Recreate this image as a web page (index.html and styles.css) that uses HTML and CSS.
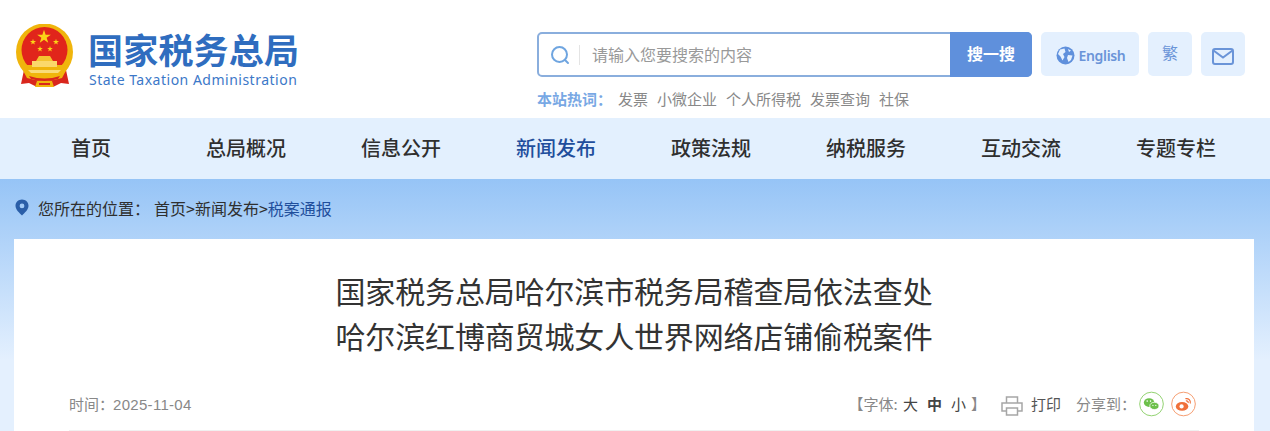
FILE: index.html
```html
<!DOCTYPE html>
<html lang="zh-CN">
  <head>
    <meta charset="utf-8">
    <title>国家税务总局</title>
    <link rel="stylesheet" href="styles.css">
  </head>
  <body>
    <header class="top">
      <a class="logo">
        <svg class="emblem" width="60" height="64" viewBox="0 0 60 64">
          <defs>
            <path id="star" d="M0-10 2.245-3.090 9.510-3.090 3.633 1.180 5.878 8.090 0 3.820-5.878 8.090-3.633 1.180-9.510-3.090-2.245-3.090Z" fill="#fbd317"/>
          </defs>
          <path d="M9 46 L6 60 L14 59 L22 63 H38 L46 59 L54 60 L51 46Z" fill="#d9261c"/>
          <circle cx="29.500" cy="28" r="28.500" fill="#f0b50c"/>
          <circle cx="29.500" cy="26" r="23" fill="#e1251b"/>
          <path d="M5 41 H54 L47 54 Q29.500 60 12 54Z" fill="#f0b50c"/>
          <path d="M13 46 H46 L43 49 H16Z" fill="#f9dc7a"/>
          <path d="M14 52 Q29.500 57 45 52 L43 55 Q29.500 59 16 55Z" fill="#d9261c"/>
          <path d="M22 57 H37 L39 63 H20Z" fill="#f0b50c"/>
          <path d="M24 59 H35 V61 H24Z" fill="#d9261c"/>
          <path d="M24 32 H35 L38 37 H21Z" fill="#f4c430"/>
          <path d="M17 37 H42 V43 H17Z" fill="#fbd86a"/>
          <use href="#star" transform="translate(29 13) scale(.72)"/>
          <use href="#star" transform="translate(18 18) scale(.32)"/>
          <use href="#star" transform="translate(41 18) scale(.32)"/>
          <use href="#star" transform="translate(25 25) scale(.3)"/>
          <use href="#star" transform="translate(35 25) scale(.3)"/>
        </svg>
        <div class="logo-text">
          <div class="logo-cn">国家税务总局</div>
          <div class="logo-en">State Taxation Administration</div>
        </div>
      </a>
      <div class="tools">
        <div class="tools-row">
          <div class="search">
            <svg class="search-icon" width="20" height="20" viewBox="0 0 20 20" fill="none" stroke="#6fa5e0" stroke-width="2">
              <circle cx="9.500" cy="9.500" r="7.500"/>
              <path d="M15 15 L18 18" stroke-linecap="round"/>
            </svg>
            <span class="search-sep"></span>
            <span class="search-hint">请输入您要搜索的内容</span>
            <span class="search-btn">搜一搜</span>
          </div>
          <a class="chip chip-en">
            <svg width="19" height="19" viewBox="0 0 19 19">
              <circle cx="9.500" cy="9.500" r="9" fill="#5f90dc"/>
              <path d="M4 3.500 L8.500 2.500 L9.500 6 L7 8 L8.500 11 L6.500 14.500 L4.500 10.500 L2 8Z M12 9 L16.500 9.500 L15 14 L12.500 16 L11 12Z M12 3 L15 4.500 L13 6Z" fill="#e4f0fe"/>
            </svg>
            English
          </a>
          <a class="chip chip-sq chip-fan">繁</a>
          <a class="chip chip-sq chip-mail">
            <svg width="22" height="17" viewBox="0 0 22 17" fill="none" stroke="#6a94d8" stroke-width="2">
              <rect x="1" y="1" width="20" height="15" rx="2"/>
              <path d="M1.500 2.500 L11 9.500 L20.500 2.500"/>
            </svg>
          </a>
        </div>
        <div class="hot">
          <b>本站热词：</b>
          <a>发票</a><a>小微企业</a><a>个人所得税</a><a>发票查询</a><a>社保</a>
        </div>
      </div>
    </header>

    <nav class="nav">
      <a>首页</a>
      <a>总局概况</a>
      <a>信息公开</a>
      <a class="on">新闻发布</a>
      <a>政策法规</a>
      <a>纳税服务</a>
      <a>互动交流</a>
      <a>专题专栏</a>
    </nav>

    <main class="page">
      <div class="crumb">
        <svg width="14" height="17" viewBox="0 0 14 17">
          <path fill-rule="evenodd" d="M7 0.500 C3.300 .5 .5 3.300 .5 6.800 C.5 10.800 4.500 14 7 16.500 C9.500 14 13.500 10.800 13.500 6.800 C13.500 3.300 10.700 .5 7 .5Z M7 4.500 A2.400 2.400 0 1 1 7 9.300 A2.400 2.400 0 1 1 7 4.500Z" fill="#2a5ea8"/>
        </svg>
        <span class="crumb-label">您所在的位置：</span>
        <span>首页&gt;新闻发布&gt;<a class="crumb-now">税案通报</a></span>
      </div>
      <article class="card">
        <h1 class="title">国家税务总局哈尔滨市税务局稽查局依法查处<br>哈尔滨红博商贸城女人世界网络店铺偷税案件</h1>
        <div class="meta">
          <span class="date meta-txt">时间：<span class="date-num">2025-11-04</span></span>
          <div class="meta-right">
            <span class="fontsize meta-txt">【字体: <b class="sz">大</b><b class="sz sz-on">中</b><b class="sz">小</b><span class="close">】</span></span>
            <a class="print">
              <svg width="22" height="20" viewBox="0 0 22 20" fill="none" stroke="#a6a6a6" stroke-width="1.500">
                <path d="M5.500 7 V1 H16.500 V7"/>
                <path d="M5.500 15 H1 V7 H21 V15 H16.500"/>
                <path d="M5.500 12 H16.500 V19 H5.500Z"/>
              </svg>
              <span class="meta-txt">打印</span>
            </a>
            <span class="meta-txt">分享到：</span>
            <svg class="share-ico share-wx" width="25" height="26" viewBox="0 0 26 26">
              <circle cx="13" cy="13" r="12.300" fill="#fff" stroke="#8fd06c"/>
              <ellipse cx="10.500" cy="11.500" rx="5.500" ry="4.500" fill="#6cc04a"/>
              <ellipse cx="16" cy="15" rx="4.800" ry="3.800" fill="#6cc04a" stroke="#fff" stroke-width=".8"/>
              <circle cx="8.500" cy="10" r=".8" fill="#fff"/>
              <circle cx="12" cy="10" r=".8" fill="#fff"/>
              <circle cx="14.500" cy="14.500" r=".6" fill="#fff"/>
              <circle cx="17.500" cy="14.500" r=".6" fill="#fff"/>
            </svg>
            <svg class="share-ico share-wb" width="25" height="26" viewBox="0 0 26 26">
              <circle cx="13" cy="13" r="12.300" fill="#fff" stroke="#f59a6c"/>
              <ellipse cx="11.500" cy="15.500" rx="6.500" ry="4.500" fill="#f0703a"/>
              <circle cx="11" cy="15.500" r="2.200" fill="#fff"/>
              <path d="M15 7.500 A4 4 0 0 1 20 12.500 M15.500 9.800 A1.800 1.800 0 0 1 17.800 12" fill="none" stroke="#f0703a" stroke-width="1.300"/>
            </svg>
          </div>
        </div>
      </article>
    </main>
  </body>
</html>
```

FILE: styles.css
```css
html, body {
  margin: 0;
  padding: 0;
}

body {
  font-family: "Noto Sans CJK SC", "Liberation Sans", sans-serif;
  color: #333;
  overflow: hidden;
  height: 431px;
}

a {
  color: inherit;
  text-decoration: none;
}

.top {
  display: flex;
  justify-content: space-between;
  height: 118px;
  padding: 0 25px 0 15px;
  box-sizing: border-box;
}

.logo {
  display: flex;
  gap: 13px;
  padding-top: 24px;
}

.logo-cn {
  font-size: 35px;
  line-height: 40px;
  letter-spacing: .2px;
  margin-top: 5px;
  font-weight: 700;
  color: #2f6dbf;
  white-space: nowrap;
}

.logo-en {
  font-family: "Noto Sans", sans-serif;
  font-size: 14px;
  line-height: 20px;
  letter-spacing: .5px;
  margin: 1px 0 0 1px;
  color: #3c78c8;
  white-space: nowrap;
}

.tools {
  padding-top: 32px;
}

.tools-row {
  display: flex;
  gap: 9px;
}

.search {
  display: flex;
  align-items: center;
  width: 495px;
  height: 45px;
  box-sizing: border-box;
  border: 2px solid #8aaedd;
  border-radius: 5px;
  padding-left: 11px;
}

.search-sep {
  width: 1px;
  height: 20px;
  background: #e4e4e4;
  margin: 0 12px 0 9px;
}

.search-hint {
  flex: 1;
  padding-bottom: 2px;
  font-size: 16px;
  color: #999;
}

.search-btn {
  width: 82px;
  height: 45px;
  margin-right: -2px;
  border-radius: 0 5px 5px 0;
  background: #5f90dc;
  color: #fff;
  font-size: 16px;
  font-weight: 700;
  line-height: 43px;
  text-align: center;
}

.chip {
  display: flex;
  align-items: center;
  justify-content: center;
  height: 44px;
  box-sizing: border-box;
  background: #e4f0fe;
  border-radius: 5px;
  color: #6a94d8;
}

.chip-en {
  width: 98px;
  gap: 4px;
  padding: 2px 0 0 1px;
  font-family: "Noto Sans", sans-serif;
  font-size: 14px;
  font-weight: 600;
  letter-spacing: -.35px;
}

.chip-sq {
  width: 44px;
}

.chip-fan {
  font-size: 16px;
  padding-bottom: 4px;
}

.chip-mail {
  padding-top: 4px;
}

.hot {
  display: flex;
  gap: 9px;
  margin-top: 11px;
  font-size: 15px;
  line-height: 22px;
  color: #888;
}

.hot b {
  color: #78a8e4;
  margin-right: -3px;
}

.nav {
  display: grid;
  grid-template-columns: repeat(8, 155px);
  justify-content: center;
  height: 61px;
  padding-right: 3px;
  background: #e3f0fe;
  font-size: 20px;
  font-weight: 500;
  line-height: 60px;
  text-align: center;
  color: #2f2f2f;
}

.nav .on {
  color: #1f4e9c;
}

.page {
  height: 252px;
  padding: 0 16px 0 14px;
  background: linear-gradient(#96c4f6, #e4f0fe 72%);
}

.crumb {
  display: flex;
  align-items: center;
  height: 57px;
  padding: 0 0 3px 1px;
  font-size: 16px;
  color: #2f2f2f;
}

.crumb-label {
  margin: 0 3px 0 9px;
  width: 113px;
}

.crumb-now {
  color: #1f4e9c;
}

.card {
  background: #fff;
  height: 192px;
  padding: 0 55px;
}

.title {
  margin: 0;
  padding-top: 29px;
  font-size: 30px;
  font-weight: 400;
  line-height: 45px;
  letter-spacing: -.15px;
  text-align: center;
  color: #333;
}

.meta {
  display: flex;
  justify-content: space-between;
  align-items: center;
  margin-top: 25px;
  height: 42px;
  padding-bottom: 5px;
  border-bottom: 1px solid #f0f0f0;
  font-size: 15px;
  color: #888;
}

.meta-txt {
  padding-bottom: 2px;
}

.date {
  font-family: "Liberation Sans", "Noto Sans CJK SC", sans-serif;
}

.date-num {
  margin-left: -1px;
  letter-spacing: .3px;
}

.meta-right {
  display: flex;
  align-items: center;
  margin-right: 3px;
}

.fontsize {
  margin-right: 15px;
}

.sz {
  font-weight: 400;
  color: #444;
  margin-left: 9px;
}

.sz:first-child {
  margin-left: 2px;
}

.sz-on {
  font-weight: 700;
}

.close {
  margin-left: 5px;
}

.print {
  display: flex;
  align-items: center;
  gap: 8px;
  margin-right: 15px;
  color: #555;
}

.print svg {
  margin-top: 4px;
}

.share-wx {
  margin-left: 3px;
}

.share-wb {
  margin-left: 7px;
}
```
